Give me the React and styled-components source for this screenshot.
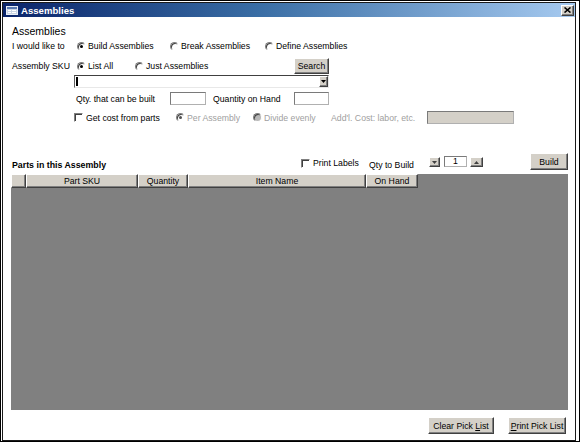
import React from 'react'
import styled, { createGlobalStyle, css } from 'styled-components'

const GlobalStyle = createGlobalStyle`
  html, body { margin: 0; padding: 0; background: #fff; }
  body {
    font-family: "Liberation Sans", Arial, sans-serif;
    font-size: 8.7px;
    color: #000;
  }
  * { box-sizing: border-box; }
`

const raised = css`
  background: #d4d0c8;
  border: 1px solid;
  border-color: #fff #404040 #404040 #fff;
  box-shadow: inset -1px -1px 0 #808080;
`

const sunken = css`
  border: 1px solid;
  border-color: #808080 #e8e8e8 #e8e8e8 #808080;
`

const Window = styled.div`
  width: 580px;
  height: 442px;
  border: 1px solid #000;
  padding: 1px 3px 0 1px;
  display: flex;
  background: #fff;
`

const Frame = styled.div`
  flex: 1;
  display: flex;
  flex-direction: column;
  border: 1px solid #1a1a1a;
  background: #fff;
`

const TitleBar = styled.div`
  height: 14px;
  flex: none;
  display: flex;
  align-items: center;
  padding: 0 1px 0 3px;
  background: linear-gradient(to right, #0a246a 0%, #3a6ea5 45%, #a6caf0 100%);
`

const TitleText = styled.span`
  margin-left: 3px;
  color: #fff;
  font-weight: bold;
  font-size: 9.6px;
  font-family: "Liberation Sans", Arial, sans-serif;
`

const CloseButton = styled.div`
  ${raised};
  margin-left: auto;
  width: 13px;
  height: 11px;
  display: flex;
  align-items: center;
  justify-content: center;
`

const Body = styled.div`
  flex: 1;
  display: flex;
  flex-direction: column;
  padding: 8px 7px 0 9px;
`

const Heading = styled.div`
  font-size: 10.5px;
  line-height: 12px;
`

const Row = styled.div`
  display: flex;
  align-items: ${p => p.$align || 'center'};
  height: ${p => p.$h}px;
  margin-top: ${p => p.$mt || 0}px;
  padding-left: ${p => p.$pl || 0}px;
  width: ${p => (p.$w ? `${p.$w}px` : 'auto')};
  flex: none;
`

const FieldLabel = styled.span`
  flex: none;
  width: ${p => (p.$w ? `${p.$w}px` : 'auto')};
  margin-left: ${p => p.$ml || 0}px;
  color: ${p => (p.$disabled ? '#a0a0a0' : '#000')};
  line-height: ${p => p.$lh || 14}px;
  white-space: nowrap;
`

const PartsTitle = styled(FieldLabel)`
  font-weight: bold;
  font-size: 8.8px;
`

const Option = styled.label`
  flex: none;
  display: flex;
  align-items: center;
  gap: ${p => p.$gap ?? 2}px;
  width: ${p => (p.$w ? `${p.$w}px` : 'auto')};
  margin-bottom: ${p => p.$mb || 0}px;
  color: ${p => (p.$disabled ? '#a0a0a0' : '#000')};
  line-height: ${p => p.$lh || 14}px;
  white-space: nowrap;
`

const Radio = styled.span`
  position: relative;
  flex: none;
  width: 9px;
  height: 9px;
  border-radius: 50%;
  border: 1px solid;
  border-color: #808080 #fff #fff #808080;
  box-shadow: inset 1px 1px 0 #404040;
  background: ${p => (p.$fill ? '#b8b8b8' : '#fff')};
  &::after {
    content: '';
    position: absolute;
    left: 2px;
    top: 2px;
    width: 3px;
    height: 3px;
    border-radius: 50%;
    background: ${p => (p.$disabled ? '#505050' : '#000')};
    display: ${p => (p.$checked ? 'block' : 'none')};
  }
`

const Check = styled.span`
  flex: none;
  width: 9px;
  height: 9px;
  background: #fff;
  border: 1px solid;
  border-color: #808080 #fff #fff #808080;
  box-shadow: inset 1px 1px 0 #404040;
`

const TextBox = styled.div`
  flex: none;
  width: ${p => p.$w}px;
  height: ${p => p.$h || 13}px;
  margin-left: ${p => (p.$auto ? 'auto' : `${p.$ml || 0}px`)};
  margin-bottom: ${p => p.$mb || 0}px;
  border: 1px solid;
  border-color: #7a7a7a #b0b0b0 #b0b0b0 #7a7a7a;
  background: ${p => (p.$gray ? '#d4d0c8' : '#fff')};
  display: flex;
  align-items: center;
  justify-content: center;
  line-height: 9px;
`

const Combo = styled.div`
  flex: none;
  margin-top: 1px;
  margin-left: 62px;
  width: 255px;
  height: 13px;
  ${sunken};
  border-top-color: #404040;
  border-left-color: #606060;
  display: flex;
  align-items: stretch;
  background: #fff;
`

const Caret = styled.span`
  width: 2px;
  margin: 1px 0 1px 1px;
  background: #000;
`

const DropButton = styled.span`
  ${raised};
  margin-left: auto;
  width: 9px;
  display: flex;
  align-items: center;
  justify-content: center;
`

const Button = styled.button`
  ${raised};
  flex: none;
  width: ${p => p.$w}px;
  height: ${p => p.$h || 16}px;
  margin-left: ${p => (p.$auto ? 'auto' : '0')};
  padding: 0;
  font-family: "Liberation Sans", Arial, sans-serif;
  font-size: 8.7px;
  color: #000;
  line-height: 10px;
`

const SpinButton = styled.span`
  ${raised};
  flex: none;
  width: ${p => p.$w}px;
  height: 10px;
  margin-left: ${p => p.$ml || 0}px;
  margin-bottom: 3px;
  display: flex;
  align-items: center;
  justify-content: center;
`

const Grid = styled.div`
  flex: none;
  height: 236px;
  margin: 4px 0 0 -1px;
  background: #808080;
`

const HeaderRow = styled.div`
  display: flex;
  height: 14px;
`

const HeaderCell = styled.div`
  ${raised};
  flex: none;
  width: ${p => p.$w}px;
  text-align: center;
  line-height: 12px;
  white-space: nowrap;
`

const Footer = styled.div`
  display: flex;
  justify-content: flex-end;
  gap: 14px;
  margin-top: 7px;
  padding-right: 2px;
`

function FormIcon() {
  return (
    <svg width="12" height="9" viewBox="0 0 12 9">
      <rect x="0.5" y="0.5" width="11" height="8" fill="#c8d4e4" stroke="#e8eef6" />
      <rect x="1" y="1" width="10" height="2" fill="#5a7ab0" />
      <line x1="2" y1="4.5" x2="5" y2="4.5" stroke="#fff" />
      <line x1="6" y1="4.5" x2="10" y2="4.5" stroke="#fff" />
      <line x1="2" y1="6.5" x2="5" y2="6.5" stroke="#fff" />
      <line x1="6" y1="6.5" x2="10" y2="6.5" stroke="#fff" />
    </svg>
  )
}

function CloseIcon() {
  return (
    <svg width="7" height="6" viewBox="0 0 7 6">
      <path d="M0.5 0.5 L6.5 5.5 M6.5 0.5 L0.5 5.5" stroke="#000" strokeWidth="1.6" />
    </svg>
  )
}

function Triangle({ up, color = '#000' }) {
  return (
    <svg width="5" height="3" viewBox="0 0 5 3">
      <path d={up ? 'M0 3 L2.5 0 L5 3 Z' : 'M0 0 L5 0 L2.5 3 Z'} fill={color} />
    </svg>
  )
}

export default function App() {
  return (
    <>
      <GlobalStyle />
      <Window>
        <Frame>
          <TitleBar>
            <FormIcon />
            <TitleText>Assemblies</TitleText>
            <CloseButton>
              <CloseIcon />
            </CloseButton>
          </TitleBar>

          <Body>
            <Heading>Assemblies</Heading>

            <Row $h={14} $mt={2}>
              <FieldLabel $w={65}>I would like to</FieldLabel>
              <Option $w={93}><Radio $checked />Build Assemblies</Option>
              <Option $w={95}><Radio />Break Assemblies</Option>
              <Option><Radio />Define Assemblies</Option>
            </Row>

            <Row $h={16} $mt={5} $w={317}>
              <FieldLabel $w={65}>Assembly SKU</FieldLabel>
              <Option $w={58}><Radio $checked />List All</Option>
              <Option><Radio />Just Assemblies</Option>
              <Button $w={35} $auto>Search</Button>
            </Row>

            <Combo>
              <Caret />
              <DropButton><Triangle /></DropButton>
            </Combo>

            <Row $h={13} $mt={4} $pl={64} $w={317}>
              <FieldLabel $w={94}>Qty. that can be built</FieldLabel>
              <TextBox $w={36} />
              <FieldLabel $ml={7}>Quantity on Hand</FieldLabel>
              <TextBox $w={35} $auto />
            </Row>

            <Row $h={13} $mt={6} $pl={62}>
              <Option $w={102} $gap={3}><Check />Get cost from parts</Option>
              <Option $w={77} $disabled><Radio $checked $disabled />Per Assembly</Option>
              <Option $w={78} $disabled><Radio $fill />Divide evenly</Option>
              <FieldLabel $w={96} $disabled>Add'l. Cost: labor, etc.</FieldLabel>
              <TextBox $w={87} $gray />
            </Row>

            <Row $h={17} $mt={29} $align="flex-end">
              <PartsTitle $w={289} $lh={10}>Parts in this Assembly</PartsTitle>
              <Option $w={68} $gap={3} $lh={10} $mb={2}><Check />Print Labels</Option>
              <FieldLabel $w={60} $lh={10}>Qty to Build</FieldLabel>
              <SpinButton $w={11}><Triangle color="#404040" /></SpinButton>
              <TextBox $w={23} $h={11} $ml={4} $mb={3}>1</TextBox>
              <SpinButton $w={13} $ml={3}><Triangle up color="#404040" /></SpinButton>
              <Button $w={38} $h={17} $auto>Build</Button>
            </Row>

            <Grid>
              <HeaderRow>
                <HeaderCell $w={15} />
                <HeaderCell $w={112}>Part SKU</HeaderCell>
                <HeaderCell $w={50}>Quantity</HeaderCell>
                <HeaderCell $w={178}>Item Name</HeaderCell>
                <HeaderCell $w={52}>On Hand</HeaderCell>
              </HeaderRow>
            </Grid>

            <Footer>
              <Button $w={66} $h={17}>Clear Pick <u>L</u>ist</Button>
              <Button $w={58} $h={17}><u>P</u>rint Pick List</Button>
            </Footer>
          </Body>
        </Frame>
      </Window>
    </>
  )
}
